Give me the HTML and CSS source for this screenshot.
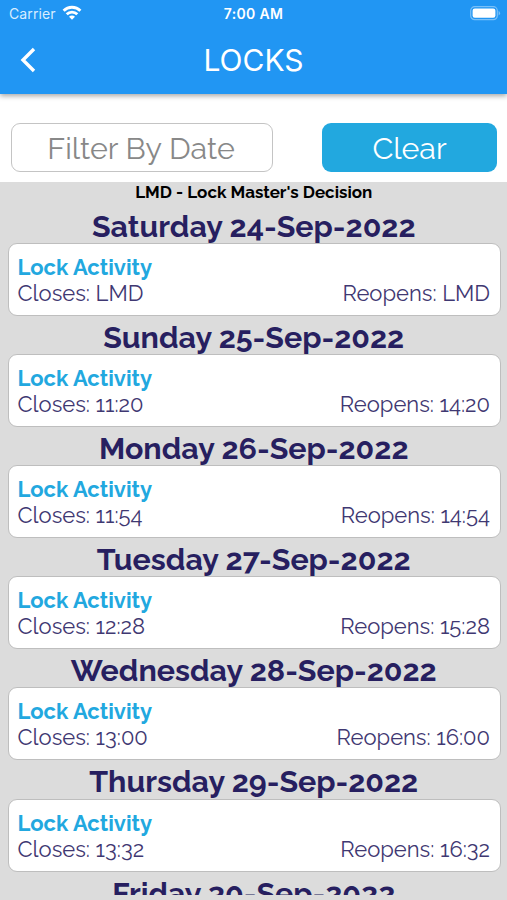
FILE: index.html
```
<!DOCTYPE html>
<html lang="en">
<head>
<meta charset="utf-8">
<title>Locks</title>
<link rel="stylesheet" href="styles.css">
</head>

<body>
	<div class="header">
		<div class="status">
			<div class="carrier">
				<span>Carrier</span>
				<svg class="wifi" width="20" height="15" viewBox="0 0 20 15" fill="none" stroke="#fff" stroke-width="2.9">
					<path d="M1.6 5.7a12 12 0 0 1 16.8 0"/>
					<path d="M4.7 9.3a7.6 7.6 0 0 1 10.6 0"/>
					<path d="M10 14.8l-3-3a4.2 4.2 0 0 1 6 0z" fill="#fff" stroke="none"/>
				</svg>
			</div>
			<div class="time">7:00 AM</div>
			<svg class="battery" width="31" height="15" viewBox="0 0 31 15">
				<rect x=".7" y=".7" width="26.6" height="13" rx="4" fill="none" stroke="#fff" stroke-opacity=".4" stroke-width="1.2"/>
				<rect x="2.6" y="2.6" width="22.8" height="9.2" rx="2.2" fill="#fff"/>
				<path d="M28.6 4.8q3 2.4 0 4.8z" fill="#fff" fill-opacity=".4"/>
			</svg>
		</div>
		<div class="nav">
			<svg class="back" width="18" height="26" viewBox="0 0 18 26" fill="none" stroke="#fff" stroke-width="3.4">
				<path d="M15 2L4 13l11 11"/>
			</svg>
			<div class="title">LOCKS</div>
		</div>
	</div>

	<div class="filter">
		<div class="date">Filter By Date</div>
		<div class="clear">Clear</div>
	</div>

	<div class="list">
		<div class="note">LMD - Lock Master's Decision</div>

		<div class="day">Saturday 24-Sep-2022</div>
		<div class="card">
			<div class="name">Lock Activity</div>
			<div class="times"><span>Closes: LMD</span><span>Reopens: LMD</span></div>
		</div>

		<div class="day">Sunday 25-Sep-2022</div>
		<div class="card">
			<div class="name">Lock Activity</div>
			<div class="times"><span>Closes: 11:20</span><span>Reopens: 14:20</span></div>
		</div>

		<div class="day">Monday 26-Sep-2022</div>
		<div class="card">
			<div class="name">Lock Activity</div>
			<div class="times"><span>Closes: 11:54</span><span>Reopens: 14:54</span></div>
		</div>

		<div class="day">Tuesday 27-Sep-2022</div>
		<div class="card">
			<div class="name">Lock Activity</div>
			<div class="times"><span>Closes: 12:28</span><span>Reopens: 15:28</span></div>
		</div>

		<div class="day">Wednesday 28-Sep-2022</div>
		<div class="card">
			<div class="name">Lock Activity</div>
			<div class="times"><span>Closes: 13:00</span><span>Reopens: 16:00</span></div>
		</div>

		<div class="day">Thursday 29-Sep-2022</div>
		<div class="card">
			<div class="name">Lock Activity</div>
			<div class="times"><span>Closes: 13:32</span><span>Reopens: 16:32</span></div>
		</div>

		<div class="day">Friday 30-Sep-2022</div>
	</div>
</body>
</html>
```

FILE: styles.css
```
*{margin:0; padding:0; box-sizing:border-box;}
body{height:900px; overflow:hidden; background:#dcdcdc; font-family:Raleway, Lato, sans-serif; white-space:nowrap;}

.header{position:relative; height:94px; background:#2196f3; color:#fff; font-family:Inter, sans-serif; box-shadow:0 2px 5px rgba(0,0,0,.35);}
.status{display:grid; grid-template-columns:1fr auto 1fr; height:27px; padding:0 6px 0 9px; align-items:center;}
.carrier{display:flex; gap:6px; align-items:center; font-size:14px; letter-spacing:.1px; color:#d8edff;}
.wifi{margin-top:-2px;}
.time{margin-right:3px; font-size:14px; font-weight:600; letter-spacing:.35px;}
.battery{justify-self:end;}
.nav{display:grid; grid-template-columns:60px 1fr 60px; height:66px; align-items:center;}
.back{margin-left:19px;}
.title{text-align:center; font-size:30px; line-height:36px;}

.filter{display:flex; justify-content:space-between; height:88px; padding:29px 10px 10px 11px; background:#fff; font-size:30.4px; line-height:51px; text-align:center;}
.date{width:262px; height:49px; padding-right:2px; border:1px solid #c4c4c4; border-radius:9px; color:#888; line-height:49px;}
.clear{width:175px; height:49px; border-radius:9px; background:#22a8df; color:#fff;}

.list{height:713px; overflow:hidden; padding:0 6px 0 7.5px;}
.note{height:20px; padding-right:1px; line-height:20px; text-align:center; font-size:17px; font-weight:bold; color:#000;}
.day{height:38.1px; padding-right:1px; line-height:48px; text-align:center; font-size:30.4px; font-weight:bold; color:#271f60;}
.card{height:73px; margin-top:3px; margin-bottom:-3px; padding:10px 10px 0 9px; border:1px solid #bebebe; border-radius:9px; background:#fff; font-size:22px; line-height:26px;}
.name{font-weight:bold; color:#22a8df;}
.times{display:flex; justify-content:space-between; color:#3f3872;}
```
